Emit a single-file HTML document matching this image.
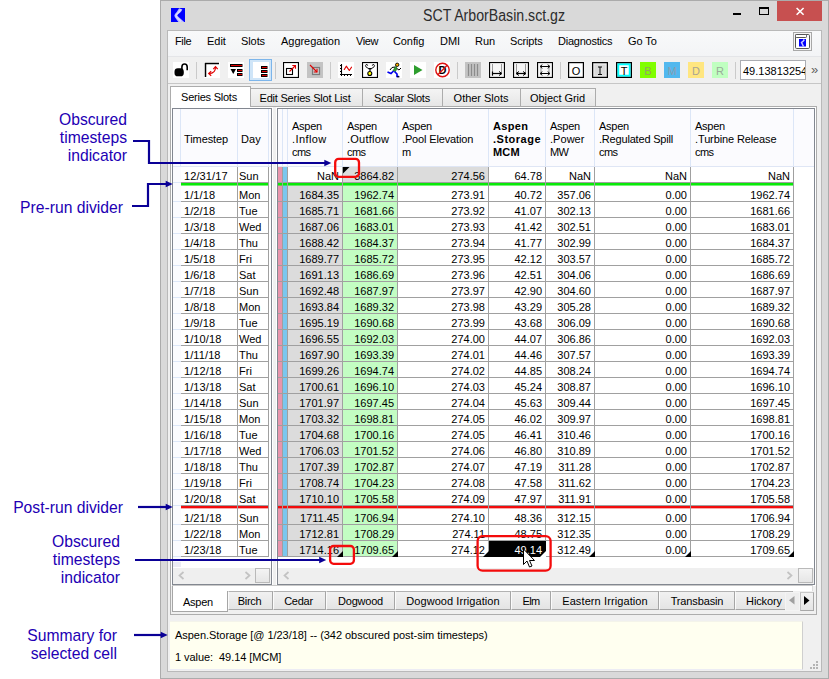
<!DOCTYPE html>
<html><head><meta charset="utf-8"><title>SCT ArborBasin.sct.gz</title>
<style>
html,body{margin:0;padding:0;background:#fff;}
body{width:829px;height:679px;position:relative;overflow:hidden;font-family:"Liberation Sans",sans-serif;font-size:11px;color:#000;}
.a{position:absolute;}
.t{position:absolute;white-space:nowrap;line-height:13px;}
.ann{position:absolute;white-space:nowrap;font-size:15.700px;line-height:18px;color:#2200b4;text-align:right;}
.c{position:absolute;height:16px;line-height:18px;text-align:right;white-space:nowrap;box-sizing:border-box;padding-right:3px;border-right:1px solid #a0a0a0;border-bottom:1px solid #a0a0a0;background:#fff;}
.l{text-align:left;padding-left:2px;padding-right:0;}
.g{background:#dcdcdc;}
.gr{background:#c3fdc3;}
.h{position:absolute;white-space:nowrap;line-height:13px;font-size:11px;}
.tab{position:absolute;box-sizing:border-box;border:1px solid #acacac;background:linear-gradient(#f4f4f4,#e6e6e6);text-align:center;white-space:nowrap;}
.tb{position:absolute;width:16px;height:16px;top:62px;}
.sep{position:absolute;top:62px;width:1px;height:17px;background:#cacaca;}
</style></head><body>

<div class="a" style="left:160px;top:0;width:669px;height:679px;background:#d9d9d9;"></div>
<div class="a" style="left:160px;top:0;width:669px;height:1px;background:#ababab;"></div>
<div class="a" style="left:160px;top:678px;width:669px;height:1px;background:#ababab;"></div>
<div class="a" style="left:160px;top:0;width:1px;height:679px;background:#ababab;"></div>
<div class="a" style="left:828px;top:0;width:1px;height:679px;background:#ababab;"></div>
<div class="a" style="left:167px;top:30px;width:655px;height:642px;background:#f0f0f0;border:1px solid #b9b9b9;box-sizing:border-box;"></div>
<svg class="a" style="left:171px;top:8px" width="14" height="14" viewBox="0 0 14 14"><rect width="14" height="14" fill="#0000ff"/><path d="M8.100 0.300 L11.400 1.500 Q10.500 3.500 9 4.800 Q6.300 6.500 6.300 7.600 Q7 9 9.900 11 L13.200 14 L7.400 14 Q5.500 11.500 3.800 9 Q2.800 7.400 4 6 Q6 4 8.100 0.300Z" fill="#bfbfff"/><path d="M9.800 1.500 Q8 4.500 5.300 6.800 Q4.600 7.500 5.500 8.800 Q7.500 11 10 13.500" stroke="#dedeff" stroke-width="1.200" fill="none"/></svg>
<div class="t" style="left:423px;top:7px;font-size:16px;line-height:18px;color:#2c2c2c;transform:scaleX(0.884);transform-origin:0 0;">SCT ArborBasin.sct.gz</div>
<div class="a" style="left:733px;top:13px;width:8px;height:2px;background:#000;"></div>
<div class="a" style="left:759px;top:7px;width:10px;height:8px;box-sizing:border-box;border:1px solid #000;border-top:2px solid #000;"></div>
<div class="a" style="left:777px;top:1px;width:45px;height:20px;background:#c75050;"></div>
<svg class="a" style="left:796px;top:7px" width="9" height="9" viewBox="0 0 9 9"><path d="M0.600 1 L7.600 7.800 M7.600 1 L0.600 7.800" stroke="#fff" stroke-width="1.600"/></svg>
<div class="a" style="left:168px;top:31px;width:653px;height:26px;background:linear-gradient(#f8f9fa,#f3f4f6);border-bottom:1px solid #e4e5e8;box-sizing:border-box;"></div>
<div class="t" style="left:175px;top:35px;letter-spacing:-0.38px;">File</div>
<div class="t" style="left:207px;top:35px;letter-spacing:-0.02px;">Edit</div>
<div class="t" style="left:241px;top:35px;letter-spacing:-0.09px;">Slots</div>
<div class="t" style="left:281px;top:35px;letter-spacing:-0.03px;">Aggregation</div>
<div class="t" style="left:356px;top:35px;letter-spacing:-0.36px;">View</div>
<div class="t" style="left:393px;top:35px;letter-spacing:-0.1px;">Config</div>
<div class="t" style="left:440px;top:35px;letter-spacing:-0.02px;">DMI</div>
<div class="t" style="left:475px;top:35px;letter-spacing:-0.03px;">Run</div>
<div class="t" style="left:510px;top:35px;letter-spacing:-0.16px;">Scripts</div>
<div class="t" style="left:558px;top:35px;letter-spacing:-0.24px;">Diagnostics</div>
<div class="t" style="left:628px;top:35px;letter-spacing:-0.07px;">Go To</div>
<div class="a" style="left:793px;top:32px;width:19px;height:19px;box-sizing:border-box;border:1px solid #a8a8a8;background:#f4f4f4;"></div>
<svg class="a" style="left:795px;top:34px" width="15" height="15" viewBox="0 0 15 15"><rect x="0.5" y="0.5" width="14" height="14" rx="1.200" fill="#fff" stroke="#555"/><rect x="0.5" y="0.5" width="11" height="3" rx="0.800" fill="#fff" stroke="#555"/><rect x="4" y="5" width="7" height="7.500" fill="#0000ff"/><path d="M9.300 5.500 L8.300 7 L6.500 8.500 L8.500 12.500" stroke="#c8c8ff" stroke-width="1.500" fill="none"/></svg>
<div class="a" style="left:168px;top:57px;width:653px;height:27px;background:#f0f0f0;border-bottom:1px solid #c6c6c6;box-sizing:border-box;"></div>
<svg class="tb" style="left:173px" viewBox="0 0 16 16"><rect width="16" height="16" fill="#fff"/><rect x="1.500" y="6.300" width="9.300" height="8" rx="3.400" fill="#000"/><path d="M8.900 7.500 V5 Q8.900 2 11.550 2 Q14.200 2 14.200 5 V8.200" fill="none" stroke="#000" stroke-width="1.600"/></svg>
<svg class="tb" style="left:204px" viewBox="0 0 16 16"><rect width="16" height="16" fill="#fff"/><path d="M1.500 15 V1.500 H15" fill="none" stroke="#000" stroke-width="1.500"/><path d="M5 11.500 Q11.500 11.500 11.500 5" fill="none" stroke="#e00000" stroke-width="1.200"/><path d="M7.200 9.300 L4.700 11.500 L7.200 13.700 M9.300 7.200 L11.500 4.700 L13.700 7.200" fill="none" stroke="#e00000" stroke-width="1.200"/></svg>
<svg class="tb" style="left:228px" viewBox="0 0 16 16"><rect width="16" height="16" fill="#fff"/><rect x="2.500" y="2.500" width="11.500" height="2" fill="#e00000" stroke="#000" stroke-width="1"/><path d="M2.500 7 H8 L5.250 12Z" fill="#000"/><rect x="9.500" y="7.500" width="4.500" height="2" fill="#e00000" stroke="#000" stroke-width="1"/><rect x="9.500" y="11.500" width="4.500" height="2" fill="#e00000" stroke="#000" stroke-width="1"/></svg>
<div class="a" style="left:249px;top:59px;width:23px;height:22px;box-sizing:border-box;border:1px solid #7db5ea;background:#cfe5f8;"></div>
<svg class="tb" style="left:253px" viewBox="0 0 16 16"><rect width="16" height="16" fill="#fff"/><rect x="8.500" y="4.500" width="5.500" height="2" fill="#e00000" stroke="#000"/><rect x="8.500" y="8.500" width="5.500" height="2" fill="#e00000" stroke="#000"/><rect x="8.500" y="12.500" width="5.500" height="2" fill="#e00000" stroke="#000"/></svg>
<svg class="tb" style="left:283px" viewBox="0 0 16 16"><rect x="0.550" y="0.550" width="14.900" height="14.900" fill="#fff" stroke="#000" stroke-width="1.100"/><rect x="3.500" y="6.500" width="6" height="6" fill="none" stroke="#000" stroke-width="1.100"/><path d="M6.500 9.500 L12.500 3.500" stroke="#e00000" stroke-width="1.100"/><path d="M9.300 3.500 H12.500 V6.700" fill="none" stroke="#e00000" stroke-width="1.100"/></svg>
<svg class="tb" style="left:307px" viewBox="0 0 16 16"><rect width="16" height="16" fill="#c3c3c3"/><rect x="5.500" y="5.500" width="7" height="7" fill="#c8c8c8" stroke="#7a7a7a" stroke-width="1.200"/><path d="M3 3 L10 10" stroke="#e00000" stroke-width="1.100"/><path d="M6.800 10 H10 V6.800" fill="none" stroke="#e00000" stroke-width="1.100"/></svg>
<svg class="tb" style="left:338px" viewBox="0 0 16 16"><rect width="16" height="16" fill="#fff"/><path d="M3.500 2 V12.500 H14" fill="none" stroke="#000" stroke-width="1.100"/><path d="M2 3.500 H3.500 M2 6.500 H3.500 M2 9.500 H3.500 M2 12.500 H3.500 M3.500 12.500 V14 M6.500 12.500 V14 M9.500 12.500 V14 M12.500 12.500 V14" stroke="#000" stroke-width="1"/><path d="M6.300 7.500 L8.300 4.200 L11.300 8.500 L13.500 5.200" fill="none" stroke="#e00000" stroke-width="1.150" stroke-linejoin="round" stroke-linecap="round"/></svg>
<svg class="tb" style="left:362px" viewBox="0 0 16 16"><rect x="0.550" y="0.550" width="14.900" height="14.900" fill="#fff" stroke="#000" stroke-width="1.100"/><path d="M6.300 6.700 H9.700 M8 6.700 V9.300" stroke="#000" stroke-width="1.200"/><path d="M6.700 6.500 Q3.400 5.400 3.500 3.700 Q3.700 2.300 5 2.500 Q5.900 2.800 5.600 3.600" fill="none" stroke="#000" stroke-width="0.900"/><path d="M9.300 6.500 Q12.600 5.400 12.500 3.700 Q12.300 2.300 11 2.500 Q10.100 2.800 10.400 3.600" fill="none" stroke="#000" stroke-width="0.900"/><circle cx="7.800" cy="11.500" r="2" fill="#ffff00" stroke="#000" stroke-width="1.100"/></svg>
<svg class="tb" style="left:386px" viewBox="0 0 16 16"><rect width="16" height="16" fill="#fff"/><circle cx="11.200" cy="2.800" r="1.700" fill="#ffb000" stroke="#000" stroke-width="0.900"/><path d="M9.500 4.500 L7 9 L9.500 9.500 L11 6Z" fill="#30a030" stroke="#1e7a1e" stroke-width="0.800"/><path d="M9 5 L6 5.500 L4 8 M10.800 6.500 L13 8 L15 6" fill="none" stroke="#000" stroke-width="1"/><path d="M7.500 9 L5 11.500 L1.500 10 M8.500 9.500 L11 12 L11 14.500 L13 14.500" fill="none" stroke="#0000ee" stroke-width="1.700"/><path d="M11 14.800 H13.500" stroke="#000" stroke-width="1"/></svg>
<svg class="tb" style="left:410px" viewBox="0 0 16 16"><rect width="16" height="16" fill="#fff"/><path d="M4 3 V13 L12.500 8Z" fill="#2e9e2e"/></svg>
<svg class="tb" style="left:434px" viewBox="0 0 16 16"><rect width="16" height="16" fill="#fff"/><text x="4.600" y="12" font-family="Liberation Sans" font-weight="bold" font-size="11" fill="#000">D</text><circle cx="8.500" cy="8" r="6.700" fill="none" stroke="#dd1111" stroke-width="1.400"/><path d="M3.800 12.700 L13.200 3.300" stroke="#dd1111" stroke-width="1.400"/></svg>
<svg class="tb" style="left:465px" viewBox="0 0 16 16"><rect width="16" height="16" fill="#c3c3c3"/><path d="M3.500 2 V14 M6.500 2 V14 M9.500 2 V14 M12.500 2 V14" stroke="#8c8c8c" stroke-width="1.200"/></svg>
<svg class="tb" style="left:489px" viewBox="0 0 16 16"><rect x="0.550" y="0.550" width="14.900" height="14.900" fill="#f6f6f6" stroke="#000" stroke-width="1.100"/><path d="M3.500 2 V14 M12.500 2 V11" stroke="#9a9a9a" stroke-width="1"/><path d="M3.500 9.500 V13.500" stroke="#000" stroke-width="1.200"/><path d="M3.500 11.500 H12" stroke="#000" stroke-width="1.200"/><path d="M13 11.500 L10 9.500 M13 11.500 L10 13.500" stroke="#000" stroke-width="1"/></svg>
<svg class="tb" style="left:513px" viewBox="0 0 16 16"><rect x="0.550" y="0.550" width="14.900" height="14.900" fill="#f6f6f6" stroke="#000" stroke-width="1.100"/><path d="M3.500 2 V11 M12.500 2 V11" stroke="#9a9a9a" stroke-width="1"/><path d="M3.500 11.500 H12.500" stroke="#000" stroke-width="1.200"/><path d="M3 11.500 L6 9.500 M3 11.500 L6 13.500 M13 11.500 L10 9.500 M13 11.500 L10 13.500" stroke="#000" stroke-width="1"/></svg>
<svg class="tb" style="left:537px" viewBox="0 0 16 16"><rect x="0.550" y="0.550" width="14.900" height="14.900" fill="#f6f6f6" stroke="#000" stroke-width="1.100"/><path d="M4 6 V10 M12 6 V10" stroke="#9a9a9a" stroke-width="1"/><path d="M3.500 4.500 H12.500 M3.500 11.500 H12.500" stroke="#000" stroke-width="1.100"/><path d="M3 4.500 L5.300 2.700 M3 4.500 L5.300 6.300 M13 4.500 L10.700 2.700 M13 4.500 L10.700 6.300 M3 11.500 L5.300 9.700 M3 11.500 L5.300 13.300 M13 11.500 L10.700 9.700 M13 11.500 L10.700 13.300" stroke="#000" stroke-width="1"/></svg>
<svg class="tb" style="left:568px" viewBox="0 0 16 16"><rect width="16" height="16" fill="#fff"/><rect x="0.600" y="0.600" width="14.800" height="14.800" fill="none" stroke="#000" stroke-width="1.200"/><text x="8" y="12.700" text-anchor="middle" font-family="Liberation Sans" font-size="11" fill="#000">O</text></svg>
<svg class="tb" style="left:592px" viewBox="0 0 16 16"><rect width="16" height="16" fill="#dadada"/><rect x="2" y="2" width="12" height="12" fill="none" stroke="#eeeeee" stroke-width="1"/><rect x="0.600" y="0.600" width="14.800" height="14.800" fill="none" stroke="#000" stroke-width="1.200"/><path d="M8 5 V12.500 M6 5 H10 M6 12.500 H10" stroke="#000" stroke-width="0.950"/></svg>
<svg class="tb" style="left:616px" viewBox="0 0 16 16"><rect width="16" height="16" fill="#fff"/><rect x="2.250" y="2.250" width="11.500" height="11.500" fill="none" stroke="#00ffff" stroke-width="2"/><rect x="0.600" y="0.600" width="14.800" height="14.800" fill="none" stroke="#000" stroke-width="1.200"/><text x="8" y="12.700" text-anchor="middle" font-family="Liberation Sans" font-size="11" fill="#000">T</text></svg>
<svg class="tb" style="left:640px" viewBox="0 0 16 16"><rect width="16" height="16" fill="#80ff00"/><text x="8" y="12.700" text-anchor="middle" font-family="Liberation Sans" font-size="11" fill="#93a365">B</text></svg>
<svg class="tb" style="left:664px" viewBox="0 0 16 16"><rect width="16" height="16" fill="#52b8ee"/><text x="8" y="12.700" text-anchor="middle" font-family="Liberation Sans" font-size="11" fill="#8a9eb0">M</text></svg>
<svg class="tb" style="left:688px" viewBox="0 0 16 16"><rect width="16" height="16" fill="#ffe680"/><text x="8" y="12.700" text-anchor="middle" font-family="Liberation Sans" font-size="11" fill="#a8a493">D</text></svg>
<svg class="tb" style="left:712px" viewBox="0 0 16 16"><rect width="16" height="16" fill="#c0ffc0"/><text x="8" y="12.700" text-anchor="middle" font-family="Liberation Sans" font-size="11" fill="#9aaa9a">R</text></svg>
<div class="sep" style="left:196px"></div>
<div class="sep" style="left:275px"></div>
<div class="sep" style="left:330px"></div>
<div class="sep" style="left:457px"></div>
<div class="sep" style="left:560px"></div>
<div class="sep" style="left:735px"></div>
<div class="a" style="left:740px;top:60px;width:66px;height:20px;box-sizing:border-box;border:1px solid #abadb3;background:#fff;overflow:hidden;"><div class="t" style="left:2px;top:4px;">49.13813254</div></div>
<div class="t" style="left:811px;top:63px;font-size:13px;color:#606060;">&raquo;</div>
<div class="a" style="left:170px;top:106px;width:647px;height:509px;box-sizing:border-box;border:1px solid #adadad;background:#f0f0f0;"></div>
<div class="tab" style="left:250px;top:88px;width:113px;height:19px;line-height:18px;padding-right:3px;letter-spacing:-0.21px;">Edit Series Slot List</div>
<div class="tab" style="left:362px;top:88px;width:81px;height:19px;line-height:18px;padding-right:1px;letter-spacing:-0.23px;">Scalar Slots</div>
<div class="tab" style="left:442px;top:88px;width:79px;height:19px;line-height:18px;padding-right:1px;letter-spacing:-0.02px;">Other Slots</div>
<div class="tab" style="left:520px;top:88px;width:76px;height:19px;line-height:18px;padding-right:1px;letter-spacing:-0.06px;">Object Grid</div>
<div class="tab" style="left:170px;top:86px;width:81px;height:21px;line-height:20px;padding-right:3px;background:#fff;border-bottom:none;letter-spacing:-0.24px;">Series Slots</div>
<div class="a" style="left:172px;top:108px;width:100px;height:477px;box-sizing:border-box;border:1px solid #828790;background:#fff;box-shadow:0 0 0 1px #fff;"></div>
<div class="a" style="left:277px;top:108px;width:538px;height:477px;box-sizing:border-box;border:1px solid #828790;background:#fff;box-shadow:0 0 0 1px #fff;"></div>
<div class="a" style="left:173px;top:109px;width:98px;height:57px;background:#fbfbfe;border-bottom:1px solid #dfe6f5;"></div>
<div class="a" style="left:278px;top:109px;width:536px;height:57px;background:#fbfbfe;border-bottom:1px solid #dfe6f5;"></div>
<div class="a" style="left:180px;top:109px;width:1px;height:57px;background:#dce6f7;"></div>
<div class="a" style="left:237px;top:109px;width:1px;height:57px;background:#dce6f7;"></div>
<div class="a" style="left:268px;top:109px;width:1px;height:57px;background:#dce6f7;"></div>
<div class="a" style="left:282px;top:109px;width:1px;height:57px;background:#dce6f7;"></div>
<div class="a" style="left:287px;top:109px;width:1px;height:57px;background:#dce6f7;"></div>
<div class="a" style="left:342px;top:109px;width:1px;height:57px;background:#dce6f7;"></div>
<div class="a" style="left:397px;top:109px;width:1px;height:57px;background:#dce6f7;"></div>
<div class="a" style="left:488px;top:109px;width:1px;height:57px;background:#dce6f7;"></div>
<div class="a" style="left:545px;top:109px;width:1px;height:57px;background:#dce6f7;"></div>
<div class="a" style="left:594px;top:109px;width:1px;height:57px;background:#dce6f7;"></div>
<div class="a" style="left:690px;top:109px;width:1px;height:57px;background:#dce6f7;"></div>
<div class="a" style="left:793px;top:109px;width:1px;height:57px;background:#dce6f7;"></div>
<div class="h" style="left:184px;top:133px;letter-spacing:-0.09px;">Timestep</div>
<div class="h" style="left:241px;top:133px;letter-spacing:0.08px;">Day</div>
<div class="h" style="left:292px;top:120px;"><span style="letter-spacing:-0.26px;">Aspen</span><br><span style="letter-spacing:0.4px;">.Inflow</span><br><span style="letter-spacing:-0.6px;">cms</span></div>
<div class="h" style="left:347px;top:120px;"><span style="letter-spacing:-0.26px;">Aspen</span><br><span style="letter-spacing:0.23px;">.Outflow</span><br><span style="letter-spacing:-0.6px;">cms</span></div>
<div class="h" style="left:402px;top:120px;"><span style="letter-spacing:-0.26px;">Aspen</span><br><span style="letter-spacing:-0.15px;">.Pool Elevation</span><br><span style="letter-spacing:0.5px;">m</span></div>
<div class="h" style="left:493px;top:120px;font-weight:bold;"><span style="letter-spacing:0.33px;">Aspen</span><br><span style="letter-spacing:0.5px;">.Storage</span><br><span style="letter-spacing:0.17px;">MCM</span></div>
<div class="h" style="left:550px;top:120px;"><span style="letter-spacing:-0.26px;">Aspen</span><br><span style="letter-spacing:0.04px;">.Power</span><br><span style="letter-spacing:-0.6px;">MW</span></div>
<div class="h" style="left:599px;top:120px;"><span style="letter-spacing:-0.26px;">Aspen</span><br><span style="letter-spacing:-0.19px;">.Regulated Spill</span><br><span style="letter-spacing:-0.6px;">cms</span></div>
<div class="h" style="left:695px;top:120px;"><span style="letter-spacing:-0.26px;">Aspen</span><br><span style="letter-spacing:-0.12px;">.Turbine Release</span><br><span style="letter-spacing:-0.6px;">cms</span></div>
<div class="a" style="left:173px;top:167px;width:8px;height:400px;background:#fbfbfe;"></div>
<div class="a" style="left:173px;top:182px;width:8px;height:1px;background:#dce6f7;"></div>
<div class="a" style="left:173px;top:201px;width:8px;height:1px;background:#dce6f7;"></div>
<div class="a" style="left:173px;top:217px;width:8px;height:1px;background:#dce6f7;"></div>
<div class="a" style="left:173px;top:233px;width:8px;height:1px;background:#dce6f7;"></div>
<div class="a" style="left:173px;top:249px;width:8px;height:1px;background:#dce6f7;"></div>
<div class="a" style="left:173px;top:265px;width:8px;height:1px;background:#dce6f7;"></div>
<div class="a" style="left:173px;top:281px;width:8px;height:1px;background:#dce6f7;"></div>
<div class="a" style="left:173px;top:297px;width:8px;height:1px;background:#dce6f7;"></div>
<div class="a" style="left:173px;top:313px;width:8px;height:1px;background:#dce6f7;"></div>
<div class="a" style="left:173px;top:329px;width:8px;height:1px;background:#dce6f7;"></div>
<div class="a" style="left:173px;top:345px;width:8px;height:1px;background:#dce6f7;"></div>
<div class="a" style="left:173px;top:361px;width:8px;height:1px;background:#dce6f7;"></div>
<div class="a" style="left:173px;top:377px;width:8px;height:1px;background:#dce6f7;"></div>
<div class="a" style="left:173px;top:393px;width:8px;height:1px;background:#dce6f7;"></div>
<div class="a" style="left:173px;top:409px;width:8px;height:1px;background:#dce6f7;"></div>
<div class="a" style="left:173px;top:425px;width:8px;height:1px;background:#dce6f7;"></div>
<div class="a" style="left:173px;top:441px;width:8px;height:1px;background:#dce6f7;"></div>
<div class="a" style="left:173px;top:457px;width:8px;height:1px;background:#dce6f7;"></div>
<div class="a" style="left:173px;top:473px;width:8px;height:1px;background:#dce6f7;"></div>
<div class="a" style="left:173px;top:489px;width:8px;height:1px;background:#dce6f7;"></div>
<div class="a" style="left:173px;top:505px;width:8px;height:1px;background:#dce6f7;"></div>
<div class="a" style="left:173px;top:524px;width:8px;height:1px;background:#dce6f7;"></div>
<div class="a" style="left:173px;top:540px;width:8px;height:1px;background:#dce6f7;"></div>
<div class="a" style="left:173px;top:556px;width:8px;height:1px;background:#dce6f7;"></div>
<div class="a" style="left:278px;top:167px;width:4px;height:390px;background:#e995ac;"></div>
<div class="a" style="left:282px;top:167px;width:1px;height:390px;background:#a0a0a0;"></div>
<div class="a" style="left:283px;top:167px;width:4px;height:390px;background:#7bc7ee;"></div>
<div class="a" style="left:287px;top:167px;width:1px;height:390px;background:#a0a0a0;"></div>
<div class="c l" style="left:181px;top:167px;width:57px;height:16px;padding-left:3px;letter-spacing:0.100px;">12/31/17</div>
<div class="c l" style="left:238px;top:167px;width:31px;height:16px;padding-left:1px;">Sun</div>
<div class="c" style="left:288px;top:167px;width:55px;height:16px;">NaN</div>
<div class="c g" style="left:343px;top:167px;width:55px;height:16px;">3864.82</div>
<div class="c g" style="left:398px;top:167px;width:91px;height:16px;">274.56</div>
<div class="c" style="left:489px;top:167px;width:57px;height:16px;">64.78</div>
<div class="c" style="left:546px;top:167px;width:49px;height:16px;">NaN</div>
<div class="c" style="left:595px;top:167px;width:96px;height:16px;">NaN</div>
<div class="c" style="left:691px;top:167px;width:103px;height:16px;">NaN</div>
<div class="a" style="left:278px;top:182px;width:10px;height:1px;background:#a0a0a0;"></div>
<div class="c l" style="left:181px;top:185px;width:57px;height:17px;padding-top:1px;padding-left:3px;letter-spacing:0.100px;">1/1/18</div>
<div class="c l" style="left:238px;top:185px;width:31px;height:17px;padding-top:1px;padding-left:1px;">Mon</div>
<div class="c g" style="left:288px;top:185px;width:55px;height:17px;padding-top:1px;">1684.35</div>
<div class="c gr" style="left:343px;top:185px;width:55px;height:17px;padding-top:1px;">1962.74</div>
<div class="c" style="left:398px;top:185px;width:91px;height:17px;padding-top:1px;">273.91</div>
<div class="c" style="left:489px;top:185px;width:57px;height:17px;padding-top:1px;">40.72</div>
<div class="c" style="left:546px;top:185px;width:49px;height:17px;padding-top:1px;">357.06</div>
<div class="c" style="left:595px;top:185px;width:96px;height:17px;padding-top:1px;">0.00</div>
<div class="c" style="left:691px;top:185px;width:103px;height:17px;padding-top:1px;">1962.74</div>
<div class="a" style="left:278px;top:201px;width:10px;height:1px;background:#a0a0a0;"></div>
<div class="c l" style="left:181px;top:202px;width:57px;height:16px;padding-left:3px;letter-spacing:0.100px;">1/2/18</div>
<div class="c l" style="left:238px;top:202px;width:31px;height:16px;padding-left:1px;">Tue</div>
<div class="c g" style="left:288px;top:202px;width:55px;height:16px;">1685.71</div>
<div class="c gr" style="left:343px;top:202px;width:55px;height:16px;">1681.66</div>
<div class="c" style="left:398px;top:202px;width:91px;height:16px;">273.92</div>
<div class="c" style="left:489px;top:202px;width:57px;height:16px;">41.07</div>
<div class="c" style="left:546px;top:202px;width:49px;height:16px;">302.13</div>
<div class="c" style="left:595px;top:202px;width:96px;height:16px;">0.00</div>
<div class="c" style="left:691px;top:202px;width:103px;height:16px;">1681.66</div>
<div class="a" style="left:278px;top:217px;width:10px;height:1px;background:#a0a0a0;"></div>
<div class="c l" style="left:181px;top:218px;width:57px;height:16px;padding-left:3px;letter-spacing:0.100px;">1/3/18</div>
<div class="c l" style="left:238px;top:218px;width:31px;height:16px;padding-left:1px;">Wed</div>
<div class="c g" style="left:288px;top:218px;width:55px;height:16px;">1687.06</div>
<div class="c gr" style="left:343px;top:218px;width:55px;height:16px;">1683.01</div>
<div class="c" style="left:398px;top:218px;width:91px;height:16px;">273.93</div>
<div class="c" style="left:489px;top:218px;width:57px;height:16px;">41.42</div>
<div class="c" style="left:546px;top:218px;width:49px;height:16px;">302.51</div>
<div class="c" style="left:595px;top:218px;width:96px;height:16px;">0.00</div>
<div class="c" style="left:691px;top:218px;width:103px;height:16px;">1683.01</div>
<div class="a" style="left:278px;top:233px;width:10px;height:1px;background:#a0a0a0;"></div>
<div class="c l" style="left:181px;top:234px;width:57px;height:16px;padding-left:3px;letter-spacing:0.100px;">1/4/18</div>
<div class="c l" style="left:238px;top:234px;width:31px;height:16px;padding-left:1px;">Thu</div>
<div class="c g" style="left:288px;top:234px;width:55px;height:16px;">1688.42</div>
<div class="c gr" style="left:343px;top:234px;width:55px;height:16px;">1684.37</div>
<div class="c" style="left:398px;top:234px;width:91px;height:16px;">273.94</div>
<div class="c" style="left:489px;top:234px;width:57px;height:16px;">41.77</div>
<div class="c" style="left:546px;top:234px;width:49px;height:16px;">302.99</div>
<div class="c" style="left:595px;top:234px;width:96px;height:16px;">0.00</div>
<div class="c" style="left:691px;top:234px;width:103px;height:16px;">1684.37</div>
<div class="a" style="left:278px;top:249px;width:10px;height:1px;background:#a0a0a0;"></div>
<div class="c l" style="left:181px;top:250px;width:57px;height:16px;padding-left:3px;letter-spacing:0.100px;">1/5/18</div>
<div class="c l" style="left:238px;top:250px;width:31px;height:16px;padding-left:1px;">Fri</div>
<div class="c g" style="left:288px;top:250px;width:55px;height:16px;">1689.77</div>
<div class="c gr" style="left:343px;top:250px;width:55px;height:16px;">1685.72</div>
<div class="c" style="left:398px;top:250px;width:91px;height:16px;">273.95</div>
<div class="c" style="left:489px;top:250px;width:57px;height:16px;">42.12</div>
<div class="c" style="left:546px;top:250px;width:49px;height:16px;">303.57</div>
<div class="c" style="left:595px;top:250px;width:96px;height:16px;">0.00</div>
<div class="c" style="left:691px;top:250px;width:103px;height:16px;">1685.72</div>
<div class="a" style="left:278px;top:265px;width:10px;height:1px;background:#a0a0a0;"></div>
<div class="c l" style="left:181px;top:266px;width:57px;height:16px;padding-left:3px;letter-spacing:0.100px;">1/6/18</div>
<div class="c l" style="left:238px;top:266px;width:31px;height:16px;padding-left:1px;">Sat</div>
<div class="c g" style="left:288px;top:266px;width:55px;height:16px;">1691.13</div>
<div class="c gr" style="left:343px;top:266px;width:55px;height:16px;">1686.69</div>
<div class="c" style="left:398px;top:266px;width:91px;height:16px;">273.96</div>
<div class="c" style="left:489px;top:266px;width:57px;height:16px;">42.51</div>
<div class="c" style="left:546px;top:266px;width:49px;height:16px;">304.06</div>
<div class="c" style="left:595px;top:266px;width:96px;height:16px;">0.00</div>
<div class="c" style="left:691px;top:266px;width:103px;height:16px;">1686.69</div>
<div class="a" style="left:278px;top:281px;width:10px;height:1px;background:#a0a0a0;"></div>
<div class="c l" style="left:181px;top:282px;width:57px;height:16px;padding-left:3px;letter-spacing:0.100px;">1/7/18</div>
<div class="c l" style="left:238px;top:282px;width:31px;height:16px;padding-left:1px;">Sun</div>
<div class="c g" style="left:288px;top:282px;width:55px;height:16px;">1692.48</div>
<div class="c gr" style="left:343px;top:282px;width:55px;height:16px;">1687.97</div>
<div class="c" style="left:398px;top:282px;width:91px;height:16px;">273.97</div>
<div class="c" style="left:489px;top:282px;width:57px;height:16px;">42.90</div>
<div class="c" style="left:546px;top:282px;width:49px;height:16px;">304.60</div>
<div class="c" style="left:595px;top:282px;width:96px;height:16px;">0.00</div>
<div class="c" style="left:691px;top:282px;width:103px;height:16px;">1687.97</div>
<div class="a" style="left:278px;top:297px;width:10px;height:1px;background:#a0a0a0;"></div>
<div class="c l" style="left:181px;top:298px;width:57px;height:16px;padding-left:3px;letter-spacing:0.100px;">1/8/18</div>
<div class="c l" style="left:238px;top:298px;width:31px;height:16px;padding-left:1px;">Mon</div>
<div class="c g" style="left:288px;top:298px;width:55px;height:16px;">1693.84</div>
<div class="c gr" style="left:343px;top:298px;width:55px;height:16px;">1689.32</div>
<div class="c" style="left:398px;top:298px;width:91px;height:16px;">273.98</div>
<div class="c" style="left:489px;top:298px;width:57px;height:16px;">43.29</div>
<div class="c" style="left:546px;top:298px;width:49px;height:16px;">305.28</div>
<div class="c" style="left:595px;top:298px;width:96px;height:16px;">0.00</div>
<div class="c" style="left:691px;top:298px;width:103px;height:16px;">1689.32</div>
<div class="a" style="left:278px;top:313px;width:10px;height:1px;background:#a0a0a0;"></div>
<div class="c l" style="left:181px;top:314px;width:57px;height:16px;padding-left:3px;letter-spacing:0.100px;">1/9/18</div>
<div class="c l" style="left:238px;top:314px;width:31px;height:16px;padding-left:1px;">Tue</div>
<div class="c g" style="left:288px;top:314px;width:55px;height:16px;">1695.19</div>
<div class="c gr" style="left:343px;top:314px;width:55px;height:16px;">1690.68</div>
<div class="c" style="left:398px;top:314px;width:91px;height:16px;">273.99</div>
<div class="c" style="left:489px;top:314px;width:57px;height:16px;">43.68</div>
<div class="c" style="left:546px;top:314px;width:49px;height:16px;">306.09</div>
<div class="c" style="left:595px;top:314px;width:96px;height:16px;">0.00</div>
<div class="c" style="left:691px;top:314px;width:103px;height:16px;">1690.68</div>
<div class="a" style="left:278px;top:329px;width:10px;height:1px;background:#a0a0a0;"></div>
<div class="c l" style="left:181px;top:330px;width:57px;height:16px;padding-left:3px;letter-spacing:0.100px;">1/10/18</div>
<div class="c l" style="left:238px;top:330px;width:31px;height:16px;padding-left:1px;">Wed</div>
<div class="c g" style="left:288px;top:330px;width:55px;height:16px;">1696.55</div>
<div class="c gr" style="left:343px;top:330px;width:55px;height:16px;">1692.03</div>
<div class="c" style="left:398px;top:330px;width:91px;height:16px;">274.00</div>
<div class="c" style="left:489px;top:330px;width:57px;height:16px;">44.07</div>
<div class="c" style="left:546px;top:330px;width:49px;height:16px;">306.86</div>
<div class="c" style="left:595px;top:330px;width:96px;height:16px;">0.00</div>
<div class="c" style="left:691px;top:330px;width:103px;height:16px;">1692.03</div>
<div class="a" style="left:278px;top:345px;width:10px;height:1px;background:#a0a0a0;"></div>
<div class="c l" style="left:181px;top:346px;width:57px;height:16px;padding-left:3px;letter-spacing:0.100px;">1/11/18</div>
<div class="c l" style="left:238px;top:346px;width:31px;height:16px;padding-left:1px;">Thu</div>
<div class="c g" style="left:288px;top:346px;width:55px;height:16px;">1697.90</div>
<div class="c gr" style="left:343px;top:346px;width:55px;height:16px;">1693.39</div>
<div class="c" style="left:398px;top:346px;width:91px;height:16px;">274.01</div>
<div class="c" style="left:489px;top:346px;width:57px;height:16px;">44.46</div>
<div class="c" style="left:546px;top:346px;width:49px;height:16px;">307.57</div>
<div class="c" style="left:595px;top:346px;width:96px;height:16px;">0.00</div>
<div class="c" style="left:691px;top:346px;width:103px;height:16px;">1693.39</div>
<div class="a" style="left:278px;top:361px;width:10px;height:1px;background:#a0a0a0;"></div>
<div class="c l" style="left:181px;top:362px;width:57px;height:16px;padding-left:3px;letter-spacing:0.100px;">1/12/18</div>
<div class="c l" style="left:238px;top:362px;width:31px;height:16px;padding-left:1px;">Fri</div>
<div class="c g" style="left:288px;top:362px;width:55px;height:16px;">1699.26</div>
<div class="c gr" style="left:343px;top:362px;width:55px;height:16px;">1694.74</div>
<div class="c" style="left:398px;top:362px;width:91px;height:16px;">274.02</div>
<div class="c" style="left:489px;top:362px;width:57px;height:16px;">44.85</div>
<div class="c" style="left:546px;top:362px;width:49px;height:16px;">308.24</div>
<div class="c" style="left:595px;top:362px;width:96px;height:16px;">0.00</div>
<div class="c" style="left:691px;top:362px;width:103px;height:16px;">1694.74</div>
<div class="a" style="left:278px;top:377px;width:10px;height:1px;background:#a0a0a0;"></div>
<div class="c l" style="left:181px;top:378px;width:57px;height:16px;padding-left:3px;letter-spacing:0.100px;">1/13/18</div>
<div class="c l" style="left:238px;top:378px;width:31px;height:16px;padding-left:1px;">Sat</div>
<div class="c g" style="left:288px;top:378px;width:55px;height:16px;">1700.61</div>
<div class="c gr" style="left:343px;top:378px;width:55px;height:16px;">1696.10</div>
<div class="c" style="left:398px;top:378px;width:91px;height:16px;">274.03</div>
<div class="c" style="left:489px;top:378px;width:57px;height:16px;">45.24</div>
<div class="c" style="left:546px;top:378px;width:49px;height:16px;">308.87</div>
<div class="c" style="left:595px;top:378px;width:96px;height:16px;">0.00</div>
<div class="c" style="left:691px;top:378px;width:103px;height:16px;">1696.10</div>
<div class="a" style="left:278px;top:393px;width:10px;height:1px;background:#a0a0a0;"></div>
<div class="c l" style="left:181px;top:394px;width:57px;height:16px;padding-left:3px;letter-spacing:0.100px;">1/14/18</div>
<div class="c l" style="left:238px;top:394px;width:31px;height:16px;padding-left:1px;">Sun</div>
<div class="c g" style="left:288px;top:394px;width:55px;height:16px;">1701.97</div>
<div class="c gr" style="left:343px;top:394px;width:55px;height:16px;">1697.45</div>
<div class="c" style="left:398px;top:394px;width:91px;height:16px;">274.04</div>
<div class="c" style="left:489px;top:394px;width:57px;height:16px;">45.63</div>
<div class="c" style="left:546px;top:394px;width:49px;height:16px;">309.44</div>
<div class="c" style="left:595px;top:394px;width:96px;height:16px;">0.00</div>
<div class="c" style="left:691px;top:394px;width:103px;height:16px;">1697.45</div>
<div class="a" style="left:278px;top:409px;width:10px;height:1px;background:#a0a0a0;"></div>
<div class="c l" style="left:181px;top:410px;width:57px;height:16px;padding-left:3px;letter-spacing:0.100px;">1/15/18</div>
<div class="c l" style="left:238px;top:410px;width:31px;height:16px;padding-left:1px;">Mon</div>
<div class="c g" style="left:288px;top:410px;width:55px;height:16px;">1703.32</div>
<div class="c gr" style="left:343px;top:410px;width:55px;height:16px;">1698.81</div>
<div class="c" style="left:398px;top:410px;width:91px;height:16px;">274.05</div>
<div class="c" style="left:489px;top:410px;width:57px;height:16px;">46.02</div>
<div class="c" style="left:546px;top:410px;width:49px;height:16px;">309.97</div>
<div class="c" style="left:595px;top:410px;width:96px;height:16px;">0.00</div>
<div class="c" style="left:691px;top:410px;width:103px;height:16px;">1698.81</div>
<div class="a" style="left:278px;top:425px;width:10px;height:1px;background:#a0a0a0;"></div>
<div class="c l" style="left:181px;top:426px;width:57px;height:16px;padding-left:3px;letter-spacing:0.100px;">1/16/18</div>
<div class="c l" style="left:238px;top:426px;width:31px;height:16px;padding-left:1px;">Tue</div>
<div class="c g" style="left:288px;top:426px;width:55px;height:16px;">1704.68</div>
<div class="c gr" style="left:343px;top:426px;width:55px;height:16px;">1700.16</div>
<div class="c" style="left:398px;top:426px;width:91px;height:16px;">274.05</div>
<div class="c" style="left:489px;top:426px;width:57px;height:16px;">46.41</div>
<div class="c" style="left:546px;top:426px;width:49px;height:16px;">310.46</div>
<div class="c" style="left:595px;top:426px;width:96px;height:16px;">0.00</div>
<div class="c" style="left:691px;top:426px;width:103px;height:16px;">1700.16</div>
<div class="a" style="left:278px;top:441px;width:10px;height:1px;background:#a0a0a0;"></div>
<div class="c l" style="left:181px;top:442px;width:57px;height:16px;padding-left:3px;letter-spacing:0.100px;">1/17/18</div>
<div class="c l" style="left:238px;top:442px;width:31px;height:16px;padding-left:1px;">Wed</div>
<div class="c g" style="left:288px;top:442px;width:55px;height:16px;">1706.03</div>
<div class="c gr" style="left:343px;top:442px;width:55px;height:16px;">1701.52</div>
<div class="c" style="left:398px;top:442px;width:91px;height:16px;">274.06</div>
<div class="c" style="left:489px;top:442px;width:57px;height:16px;">46.80</div>
<div class="c" style="left:546px;top:442px;width:49px;height:16px;">310.89</div>
<div class="c" style="left:595px;top:442px;width:96px;height:16px;">0.00</div>
<div class="c" style="left:691px;top:442px;width:103px;height:16px;">1701.52</div>
<div class="a" style="left:278px;top:457px;width:10px;height:1px;background:#a0a0a0;"></div>
<div class="c l" style="left:181px;top:458px;width:57px;height:16px;padding-left:3px;letter-spacing:0.100px;">1/18/18</div>
<div class="c l" style="left:238px;top:458px;width:31px;height:16px;padding-left:1px;">Thu</div>
<div class="c g" style="left:288px;top:458px;width:55px;height:16px;">1707.39</div>
<div class="c gr" style="left:343px;top:458px;width:55px;height:16px;">1702.87</div>
<div class="c" style="left:398px;top:458px;width:91px;height:16px;">274.07</div>
<div class="c" style="left:489px;top:458px;width:57px;height:16px;">47.19</div>
<div class="c" style="left:546px;top:458px;width:49px;height:16px;">311.28</div>
<div class="c" style="left:595px;top:458px;width:96px;height:16px;">0.00</div>
<div class="c" style="left:691px;top:458px;width:103px;height:16px;">1702.87</div>
<div class="a" style="left:278px;top:473px;width:10px;height:1px;background:#a0a0a0;"></div>
<div class="c l" style="left:181px;top:474px;width:57px;height:16px;padding-left:3px;letter-spacing:0.100px;">1/19/18</div>
<div class="c l" style="left:238px;top:474px;width:31px;height:16px;padding-left:1px;">Fri</div>
<div class="c g" style="left:288px;top:474px;width:55px;height:16px;">1708.74</div>
<div class="c gr" style="left:343px;top:474px;width:55px;height:16px;">1704.23</div>
<div class="c" style="left:398px;top:474px;width:91px;height:16px;">274.08</div>
<div class="c" style="left:489px;top:474px;width:57px;height:16px;">47.58</div>
<div class="c" style="left:546px;top:474px;width:49px;height:16px;">311.62</div>
<div class="c" style="left:595px;top:474px;width:96px;height:16px;">0.00</div>
<div class="c" style="left:691px;top:474px;width:103px;height:16px;">1704.23</div>
<div class="a" style="left:278px;top:489px;width:10px;height:1px;background:#a0a0a0;"></div>
<div class="c l" style="left:181px;top:490px;width:57px;height:16px;padding-left:3px;letter-spacing:0.100px;">1/20/18</div>
<div class="c l" style="left:238px;top:490px;width:31px;height:16px;padding-left:1px;">Sat</div>
<div class="c g" style="left:288px;top:490px;width:55px;height:16px;">1710.10</div>
<div class="c gr" style="left:343px;top:490px;width:55px;height:16px;">1705.58</div>
<div class="c" style="left:398px;top:490px;width:91px;height:16px;">274.09</div>
<div class="c" style="left:489px;top:490px;width:57px;height:16px;">47.97</div>
<div class="c" style="left:546px;top:490px;width:49px;height:16px;">311.91</div>
<div class="c" style="left:595px;top:490px;width:96px;height:16px;">0.00</div>
<div class="c" style="left:691px;top:490px;width:103px;height:16px;">1705.58</div>
<div class="a" style="left:278px;top:505px;width:10px;height:1px;background:#a0a0a0;"></div>
<div class="c l" style="left:181px;top:508px;width:57px;height:17px;padding-top:1px;padding-left:3px;letter-spacing:0.100px;">1/21/18</div>
<div class="c l" style="left:238px;top:508px;width:31px;height:17px;padding-top:1px;padding-left:1px;">Sun</div>
<div class="c g" style="left:288px;top:508px;width:55px;height:17px;padding-top:1px;">1711.45</div>
<div class="c gr" style="left:343px;top:508px;width:55px;height:17px;padding-top:1px;">1706.94</div>
<div class="c" style="left:398px;top:508px;width:91px;height:17px;padding-top:1px;">274.10</div>
<div class="c" style="left:489px;top:508px;width:57px;height:17px;padding-top:1px;">48.36</div>
<div class="c" style="left:546px;top:508px;width:49px;height:17px;padding-top:1px;">312.15</div>
<div class="c" style="left:595px;top:508px;width:96px;height:17px;padding-top:1px;">0.00</div>
<div class="c" style="left:691px;top:508px;width:103px;height:17px;padding-top:1px;">1706.94</div>
<div class="a" style="left:278px;top:524px;width:10px;height:1px;background:#a0a0a0;"></div>
<div class="c l" style="left:181px;top:525px;width:57px;height:16px;padding-left:3px;letter-spacing:0.100px;">1/22/18</div>
<div class="c l" style="left:238px;top:525px;width:31px;height:16px;padding-left:1px;">Mon</div>
<div class="c g" style="left:288px;top:525px;width:55px;height:16px;">1712.81</div>
<div class="c gr" style="left:343px;top:525px;width:55px;height:16px;">1708.29</div>
<div class="c" style="left:398px;top:525px;width:91px;height:16px;">274.11</div>
<div class="c" style="left:489px;top:525px;width:57px;height:16px;">48.75</div>
<div class="c" style="left:546px;top:525px;width:49px;height:16px;">312.35</div>
<div class="c" style="left:595px;top:525px;width:96px;height:16px;">0.00</div>
<div class="c" style="left:691px;top:525px;width:103px;height:16px;">1708.29</div>
<div class="a" style="left:278px;top:540px;width:10px;height:1px;background:#a0a0a0;"></div>
<div class="c l" style="left:181px;top:541px;width:57px;height:16px;padding-left:3px;letter-spacing:0.100px;">1/23/18</div>
<div class="c l" style="left:238px;top:541px;width:31px;height:16px;padding-left:1px;">Tue</div>
<div class="c g" style="left:288px;top:541px;width:55px;height:16px;">1714.16</div>
<div class="c gr" style="left:343px;top:541px;width:55px;height:16px;">1709.65</div>
<div class="c" style="left:398px;top:541px;width:91px;height:16px;">274.12</div>
<div class="c" style="left:489px;top:541px;width:57px;height:16px;background:#000;color:#fff;border-color:#000;">49.14</div>
<div class="c" style="left:546px;top:541px;width:49px;height:16px;">312.49</div>
<div class="c" style="left:595px;top:541px;width:96px;height:16px;">0.00</div>
<div class="c" style="left:691px;top:541px;width:103px;height:16px;">1709.65</div>
<div class="a" style="left:278px;top:556px;width:10px;height:1px;background:#a0a0a0;"></div>
<div class="a" style="left:181px;top:183px;width:88px;height:2px;background:#08ea08;"></div>
<div class="a" style="left:181px;top:185px;width:88px;height:1px;background:#08ea08;opacity:0.550;"></div>
<div class="a" style="left:181px;top:506px;width:88px;height:2px;background:#f20c0c;"></div>
<div class="a" style="left:181px;top:508px;width:88px;height:1px;background:#f20c0c;opacity:0.350;"></div>
<div class="a" style="left:278px;top:183px;width:516px;height:2px;background:#08ea08;"></div>
<div class="a" style="left:278px;top:185px;width:516px;height:1px;background:#08ea08;opacity:0.550;"></div>
<div class="a" style="left:278px;top:506px;width:516px;height:2px;background:#f20c0c;"></div>
<div class="a" style="left:278px;top:508px;width:516px;height:1px;background:#f20c0c;opacity:0.350;"></div>
<div class="a" style="left:237px;top:183px;width:1px;height:3px;background:#a0a0a0;"></div>
<div class="a" style="left:237px;top:506px;width:1px;height:3px;background:#a0a0a0;"></div>
<div class="a" style="left:268px;top:183px;width:1px;height:3px;background:#a0a0a0;"></div>
<div class="a" style="left:268px;top:506px;width:1px;height:3px;background:#a0a0a0;"></div>
<div class="a" style="left:282px;top:183px;width:1px;height:3px;background:#a0a0a0;"></div>
<div class="a" style="left:282px;top:506px;width:1px;height:3px;background:#a0a0a0;"></div>
<div class="a" style="left:287px;top:183px;width:1px;height:3px;background:#a0a0a0;"></div>
<div class="a" style="left:287px;top:506px;width:1px;height:3px;background:#a0a0a0;"></div>
<div class="a" style="left:342px;top:183px;width:1px;height:3px;background:#a0a0a0;"></div>
<div class="a" style="left:342px;top:506px;width:1px;height:3px;background:#a0a0a0;"></div>
<div class="a" style="left:397px;top:183px;width:1px;height:3px;background:#a0a0a0;"></div>
<div class="a" style="left:397px;top:506px;width:1px;height:3px;background:#a0a0a0;"></div>
<div class="a" style="left:488px;top:183px;width:1px;height:3px;background:#a0a0a0;"></div>
<div class="a" style="left:488px;top:506px;width:1px;height:3px;background:#a0a0a0;"></div>
<div class="a" style="left:545px;top:183px;width:1px;height:3px;background:#a0a0a0;"></div>
<div class="a" style="left:545px;top:506px;width:1px;height:3px;background:#a0a0a0;"></div>
<div class="a" style="left:594px;top:183px;width:1px;height:3px;background:#a0a0a0;"></div>
<div class="a" style="left:594px;top:506px;width:1px;height:3px;background:#a0a0a0;"></div>
<div class="a" style="left:690px;top:183px;width:1px;height:3px;background:#a0a0a0;"></div>
<div class="a" style="left:690px;top:506px;width:1px;height:3px;background:#a0a0a0;"></div>
<div class="a" style="left:793px;top:183px;width:1px;height:3px;background:#a0a0a0;"></div>
<div class="a" style="left:793px;top:506px;width:1px;height:3px;background:#a0a0a0;"></div>
<svg class="a" style="left:343px;top:167px" width="7" height="7"><path d="M0 0 H6.500 L0 6.500Z" fill="#000"/></svg>
<svg class="a" style="left:336px;top:550px" width="7" height="7"><path d="M7 1 V7 H1Z" fill="#000"/></svg>
<svg class="a" style="left:391px;top:550px" width="7" height="7"><path d="M7 1 V7 H1Z" fill="#000"/></svg>
<svg class="a" style="left:482px;top:550px" width="7" height="7"><path d="M7 1 V7 H1Z" fill="#000"/></svg>
<svg class="a" style="left:539px;top:550px" width="7" height="7"><path d="M7 1 V7 H1Z" fill="#fff"/></svg>
<svg class="a" style="left:588px;top:550px" width="7" height="7"><path d="M7 1 V7 H1Z" fill="#000"/></svg>
<svg class="a" style="left:684px;top:550px" width="7" height="7"><path d="M7 1 V7 H1Z" fill="#000"/></svg>
<svg class="a" style="left:787px;top:550px" width="7" height="7"><path d="M7 1 V7 H1Z" fill="#000"/></svg>
<div class="a" style="left:173px;top:568px;width:98px;height:16px;background:#efefef;"></div>
<div class="a" style="left:278px;top:568px;width:536px;height:16px;background:#efefef;"></div>
<div class="a" style="left:173px;top:562px;width:8px;height:5px;background:#ececf4;"></div>
<div class="a" style="left:255px;top:568px;width:15px;height:15px;box-sizing:border-box;border:1px solid #b9b9b9;background:linear-gradient(#f4f4f4,#e6e6e6);"></div>
<div class="a" style="left:798px;top:568px;width:15px;height:15px;box-sizing:border-box;border:1px solid #b9b9b9;background:linear-gradient(#f4f4f4,#e6e6e6);"></div>
<svg class="a" style="left:178px;top:571px" width="7" height="9"><path d="M5.500 1 L1.500 4.500 L5.500 8" stroke="#c2c2c2" stroke-width="1.700" fill="none"/></svg>
<svg class="a" style="left:244px;top:571px" width="7" height="9"><path d="M1.500 1 L5.500 4.500 L1.500 8" stroke="#c2c2c2" stroke-width="1.700" fill="none"/></svg>
<svg class="a" style="left:283px;top:571px" width="7" height="9"><path d="M5.500 1 L1.500 4.500 L5.500 8" stroke="#c2c2c2" stroke-width="1.700" fill="none"/></svg>
<svg class="a" style="left:786px;top:571px" width="7" height="9"><path d="M1.500 1 L5.500 4.500 L1.500 8" stroke="#c2c2c2" stroke-width="1.700" fill="none"/></svg>
<div class="a" style="left:172px;top:585px;width:641px;height:6px;box-sizing:border-box;background:#fff;border-top:1px solid #c9c9c9;border-right:1px solid #dcdcdc;"></div>
<div class="a" style="left:228px;top:591px;width:45px;height:19px;box-sizing:border-box;border:1px solid #a6a6a6;border-top-color:#b2b2b2;border-left-color:#fbfbfb;background:linear-gradient(#f1f1f1,#e4e4e4);text-align:center;white-space:nowrap;line-height:18px;padding-right:2px;letter-spacing:-0.31px;">Birch</div>
<div class="a" style="left:273px;top:591px;width:53px;height:19px;box-sizing:border-box;border:1px solid #a6a6a6;border-top-color:#b2b2b2;border-left-color:#fbfbfb;background:linear-gradient(#f1f1f1,#e4e4e4);text-align:center;white-space:nowrap;line-height:18px;padding-right:2px;letter-spacing:-0.25px;">Cedar</div>
<div class="a" style="left:326px;top:591px;width:69px;height:19px;box-sizing:border-box;border:1px solid #a6a6a6;border-top-color:#b2b2b2;border-left-color:#fbfbfb;background:linear-gradient(#f1f1f1,#e4e4e4);text-align:center;white-space:nowrap;line-height:18px;padding-right:0px;letter-spacing:-0.21px;">Dogwood</div>
<div class="a" style="left:395px;top:591px;width:116px;height:19px;box-sizing:border-box;border:1px solid #a6a6a6;border-top-color:#b2b2b2;border-left-color:#fbfbfb;background:linear-gradient(#f1f1f1,#e4e4e4);text-align:center;white-space:nowrap;line-height:18px;padding-right:0px;letter-spacing:0.06px;">Dogwood Irrigation</div>
<div class="a" style="left:511px;top:591px;width:40px;height:19px;box-sizing:border-box;border:1px solid #a6a6a6;border-top-color:#b2b2b2;border-left-color:#fbfbfb;background:linear-gradient(#f1f1f1,#e4e4e4);text-align:center;white-space:nowrap;line-height:18px;padding-right:0px;letter-spacing:-0.6px;">Elm</div>
<div class="a" style="left:551px;top:591px;width:108px;height:19px;box-sizing:border-box;border:1px solid #a6a6a6;border-top-color:#b2b2b2;border-left-color:#fbfbfb;background:linear-gradient(#f1f1f1,#e4e4e4);text-align:center;white-space:nowrap;line-height:18px;padding-right:0px;letter-spacing:0.1px;">Eastern Irrigation</div>
<div class="a" style="left:659px;top:591px;width:76px;height:19px;box-sizing:border-box;border:1px solid #a6a6a6;border-top-color:#b2b2b2;border-left-color:#fbfbfb;background:linear-gradient(#f1f1f1,#e4e4e4);text-align:center;white-space:nowrap;line-height:18px;padding-right:0px;letter-spacing:-0.13px;">Transbasin</div>
<div class="a" style="left:735px;top:591px;width:58px;height:19px;box-sizing:border-box;border:1px solid #a6a6a6;border-top-color:#b2b2b2;border-left-color:#fbfbfb;background:linear-gradient(#f1f1f1,#e4e4e4);text-align:center;white-space:nowrap;line-height:18px;padding-right:0px;letter-spacing:-0.12px;">Hickory</div>
<div class="a" style="left:173px;top:586px;width:54px;height:25px;background:#fff;"></div>
<div class="a" style="left:172px;top:586px;width:1px;height:26px;background:#a6a6a6;"></div>
<div class="a" style="left:227px;top:591px;width:1px;height:21px;background:#a6a6a6;"></div>
<div class="a" style="left:172px;top:611px;width:56px;height:1px;background:#a6a6a6;"></div>
<div class="t" style="left:183px;top:596px;letter-spacing:-0.260px;">Aspen</div>
<div class="a" style="left:785px;top:592px;width:15px;height:19px;background:#eeeeee;border:1px solid #f4f4f4;box-sizing:border-box;"></div>
<div class="a" style="left:800px;top:592px;width:14px;height:19px;background:linear-gradient(#f2f2f2,#e4e4e4);border:1px solid #a8a8a8;border-top-color:#c8c8c8;border-left-color:#c0c0c0;box-sizing:border-box;"></div>
<svg class="a" style="left:789px;top:596px" width="6" height="9"><path d="M5.500 0 V8.500 L0 4.250Z" fill="#a0a0a0"/></svg>
<svg class="a" style="left:804px;top:596px" width="6" height="10"><path d="M0 0 V9 L5.500 4.500Z" fill="#000"/></svg>
<div class="a" style="left:170px;top:621px;width:633px;height:49px;box-sizing:border-box;background:#fffff0;border-right:1px solid #cfcfcf;border-bottom:1px solid #ececf4;border-top:1px solid #f4f4ea;"></div>
<div class="t" style="left:175px;top:629px;letter-spacing:-0.040px;">Aspen.Storage [@ 1/23/18] -- (342 obscured post-sim timesteps)</div>
<div class="t" style="left:175px;top:651px;letter-spacing:-0.060px;">1 value:&nbsp; 49.14 [MCM]</div>
<svg class="a" style="left:809px;top:660px" width="10" height="10"><g fill="#b4b4b4"><rect x="7" y="1" width="2" height="2"/><rect x="4" y="4" width="2" height="2"/><rect x="7" y="4" width="2" height="2"/><rect x="1" y="7" width="2" height="2"/><rect x="4" y="7" width="2" height="2"/><rect x="7" y="7" width="2" height="2"/></g></svg>
<div class="ann" style="right:702px;top:111px;">Obscured<br>timesteps<br>indicator</div>
<div class="ann" style="right:706px;top:199px;">Pre-run divider</div>
<div class="ann" style="right:706px;top:499px;">Post-run divider</div>
<div class="ann" style="right:709px;top:533px;">Obscured<br>timesteps<br>indicator</div>
<div class="ann" style="right:712px;top:627px;">Summary for<br>selected cell</div>
<svg class="a" style="left:0;top:0" width="829" height="679" viewBox="0 0 829 679">
<g stroke="#0a0096" stroke-width="2.200" fill="none">
<path d="M133 141 H149 V163 H326"/>
<path d="M132 206 H148 V184 H168"/>
<path d="M138 507 H168"/>
<path d="M135 560 H321"/>
<path d="M134 635 H163"/>
</g>
<g fill="#0a0096">
<path d="M324.300 159.700 L331.300 163 L324.300 166.300Z"/>
<path d="M165.700 180.700 L172.700 184 L165.700 187.300Z"/>
<path d="M165.700 503.700 L172.700 507 L165.700 510.300Z"/>
<path d="M319.200 556.700 L326.200 560 L319.200 563.300Z"/>
<path d="M160.700 631.700 L167.700 635 L160.700 638.300Z"/>
</g>
<g stroke="#f40b0b" stroke-width="2.300" fill="none">
<rect x="335.200" y="158.900" width="23.800" height="17.900" rx="3.500"/>
<rect x="330.100" y="546" width="23.800" height="17.800" rx="3.500"/>
<rect x="477.600" y="536.100" width="73" height="34.600" rx="5"/>
</g>
<path d="M523.500 549 V564.500 L527 561 L529.500 567 L532 566 L529.500 560.500 H534.500Z" fill="#fff" stroke="#000" stroke-width="1"/>
</svg>
</body></html>
